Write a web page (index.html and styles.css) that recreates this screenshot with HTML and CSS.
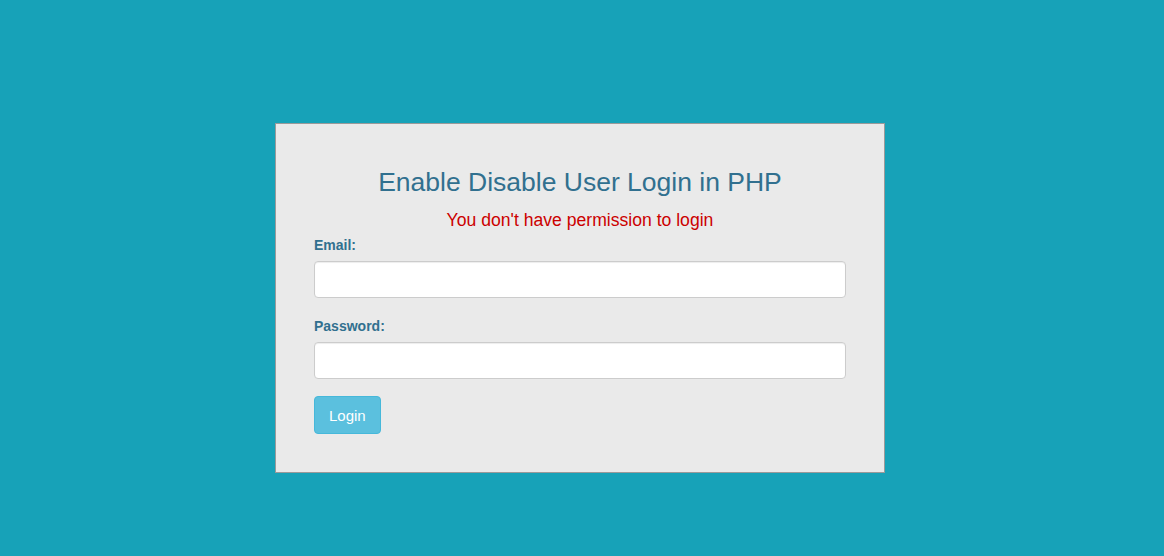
FILE: index.html
```html
<!DOCTYPE html>
<html>
<head>
<meta charset="utf-8">
<link rel="stylesheet" href="styles.css">
</head>
<body>
<div class="page">
  <div class="panel">
    <h3 class="title">Enable Disable User Login in PHP</h3>
    <div class="error">You don't have permission to login</div>
    <form class="form">
      <div class="group">
        <label class="label">Email:</label>
        <input class="input" type="text">
      </div>
      <div class="group">
        <label class="label">Password:</label>
        <input class="input" type="password">
      </div>
      <button type="button" class="btn">Login</button>
    </form>
  </div>
</div>
</body>
</html>
```
FILE: styles.css
```css
html, body {
  margin: 0;
  padding: 0;
  height: 100%;
}
body {
  background: #17a2b8;
  font-family: "Liberation Sans", Arial, Helvetica, sans-serif;
  font-size: 14px;
  line-height: 1.42857;
  color: #333;
}
.page {
  display: flex;
  justify-content: center;
  padding-top: 123px;
  padding-right: 4px;
}
.panel {
  width: 532px;
  background: #eaeaea;
  border: 1px solid #9a9a9a;
  padding: 38px 38px 38px 38px;
}
.title {
  margin: 6px 0 0;
  text-align: center;
  font-size: 26.5px;
  font-weight: normal;
  line-height: 1.1;
  color: #31708f;
}
.error {
  margin-top: 11px;
  margin-bottom: 3px;
  text-align: center;
  font-size: 17.6px;
  line-height: 25px;
  color: #cc0000;
}
.form {
  display: flex;
  flex-direction: column;
  align-items: flex-start;
}
.group {
  width: 100%;
  margin-bottom: 19px;
}
.label {
  display: block;
  font-weight: bold;
  color: #31708f;
  margin-bottom: 5px;
}
.input {
  display: block;
  box-sizing: border-box;
  width: 100%;
  height: 37px;
  margin: 0;
  padding: 6px 12px;
  border: 1px solid #ccc;
  border-radius: 4px;
  background: #fff;
  box-shadow: inset 0 1px 1px rgba(0,0,0,.075);
  font-family: inherit;
  font-size: 14px;
}
.btn {
  height: 38px;
  padding: 0 14px;
  margin-top: -2px;
  border: 1px solid #46b8da;
  border-radius: 4px;
  background: #5bc0de;
  color: #fff;
  font-family: inherit;
  font-size: 15px;
  cursor: pointer;
}
```
